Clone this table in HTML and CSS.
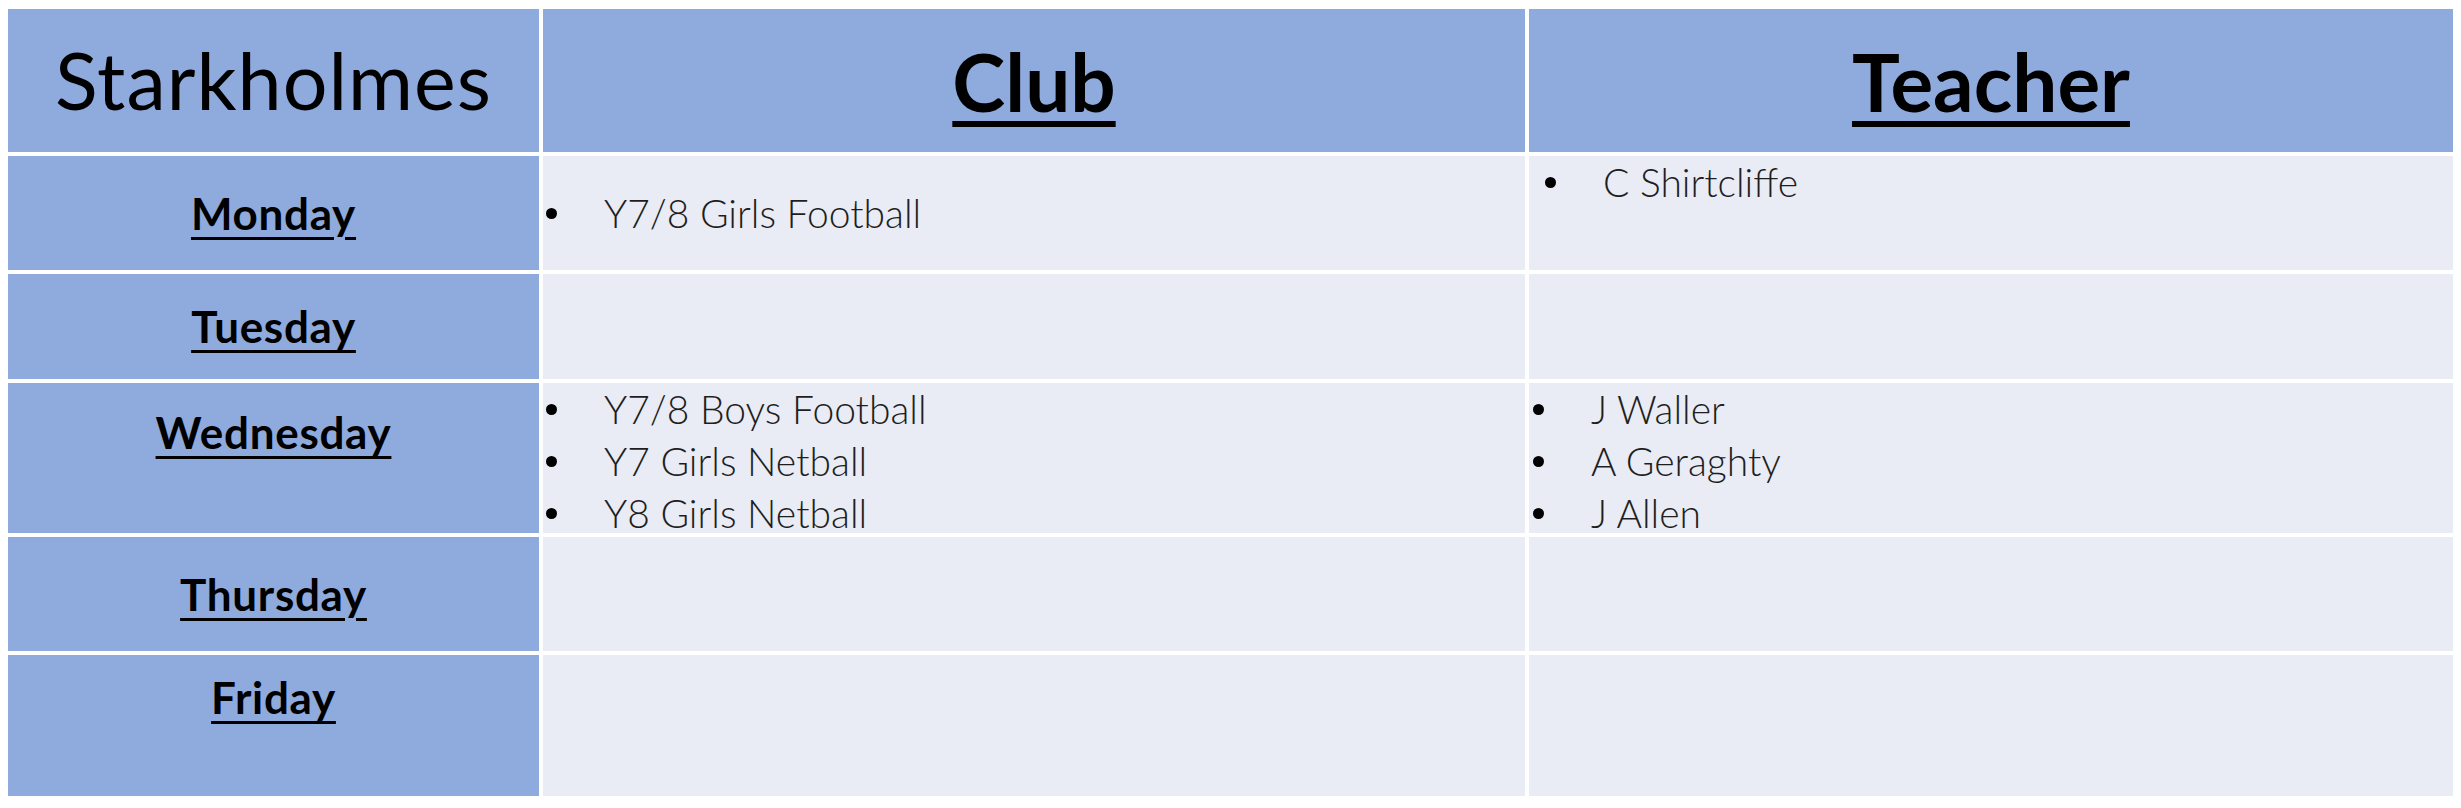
FILE: index.html
```html
<!DOCTYPE html>
<html lang="en">
<head>
<meta charset="utf-8">
<title>Starkholmes Clubs</title>
<link rel="stylesheet" href="styles.css">
</head>
<body>
<div class="sheet">
  <div class="cell head"><span class="corner">Starkholmes</span></div>
  <div class="cell head"><span class="title">Club</span></div>
  <div class="cell head"><span class="title">Teacher</span></div>

  <div class="cell day"><span class="day-name">Monday</span></div>
  <div class="cell body body--center body--club"><ul class="list"><li>Y7/8 Girls Football</li></ul></div>
  <div class="cell body body--teacher-mon"><ul class="list"><li>C Shirtcliffe</li></ul></div>

  <div class="cell day"><span class="day-name">Tuesday</span></div>
  <div class="cell body"></div>
  <div class="cell body"></div>

  <div class="cell day day--top"><span class="day-name">Wednesday</span></div>
  <div class="cell body body--club"><ul class="list"><li>Y7/8 Boys Football</li><li>Y7 Girls Netball</li><li>Y8 Girls Netball</li></ul></div>
  <div class="cell body body--teacher"><ul class="list"><li>J Waller</li><li>A Geraghty</li><li>J Allen</li></ul></div>

  <div class="cell day"><span class="day-name">Thursday</span></div>
  <div class="cell body"></div>
  <div class="cell body"></div>

  <div class="cell day day--top-sm"><span class="day-name">Friday</span></div>
  <div class="cell body"></div>
  <div class="cell body"></div>
</div>
</body>
</html>
```

FILE: styles.css
```css
html, body {
  margin: 0;
  padding: 0;
  background: #ffffff;
}

body {
  font-family: "Lato", "Open Sans", sans-serif;
  color: #000;
}

.sheet {
  display: grid;
  grid-template-columns: 531px 982px 924px;
  grid-template-rows: 143px 114px 105px 150px 114px 141px;
  gap: 4px;
  margin: 9px 0 0 8px;
  width: 2445px;
}

.cell {
  display: flex;
  min-width: 0;
}

.head {
  background: #8faadc;
  align-items: center;
  justify-content: center;
}

.corner {
  font-size: 79px;
  font-weight: 400;
  line-height: 1.2;
  letter-spacing: 1px;
  color: #000;
}

.title {
  font-size: 80px;
  font-weight: 700;
  line-height: 1.2;
  text-decoration: underline;
  text-decoration-thickness: 6px;
  text-underline-offset: 9px;
}

.day {
  background: #8faadc;
  justify-content: center;
  align-items: center;
}

.day--top {
  align-items: flex-start;
  padding-top: 23px;
}

.day--top-sm {
  align-items: flex-start;
  padding-top: 16px;
}

.day-name {
  font-size: 44px;
  font-weight: 700;
  line-height: 1.2;
  letter-spacing: 0.7px;
  text-decoration: underline;
  text-decoration-thickness: 3px;
  text-underline-offset: 7px;
}

.body {
  background: #e9ebf5;
  align-items: flex-start;
}

.body--center {
  align-items: center;
}

.body--club {
  padding-left: 3px;
}

.body--teacher {
  padding-left: 4px;
}

.body--teacher-mon {
  padding-left: 16px;
  padding-top: 0;
}

.list {
  list-style: none;
  margin: 0;
  padding: 0;
}

.list li {
  display: flex;
  align-items: center;
  font-size: 39px;
  font-weight: 300;
  line-height: 52px;
  color: #1e1e1e;
  white-space: nowrap;
}

.list li::before {
  content: "";
  flex: none;
  width: 11px;
  height: 11px;
  border-radius: 50%;
  background: #000;
  margin-right: 47px;
}
```
